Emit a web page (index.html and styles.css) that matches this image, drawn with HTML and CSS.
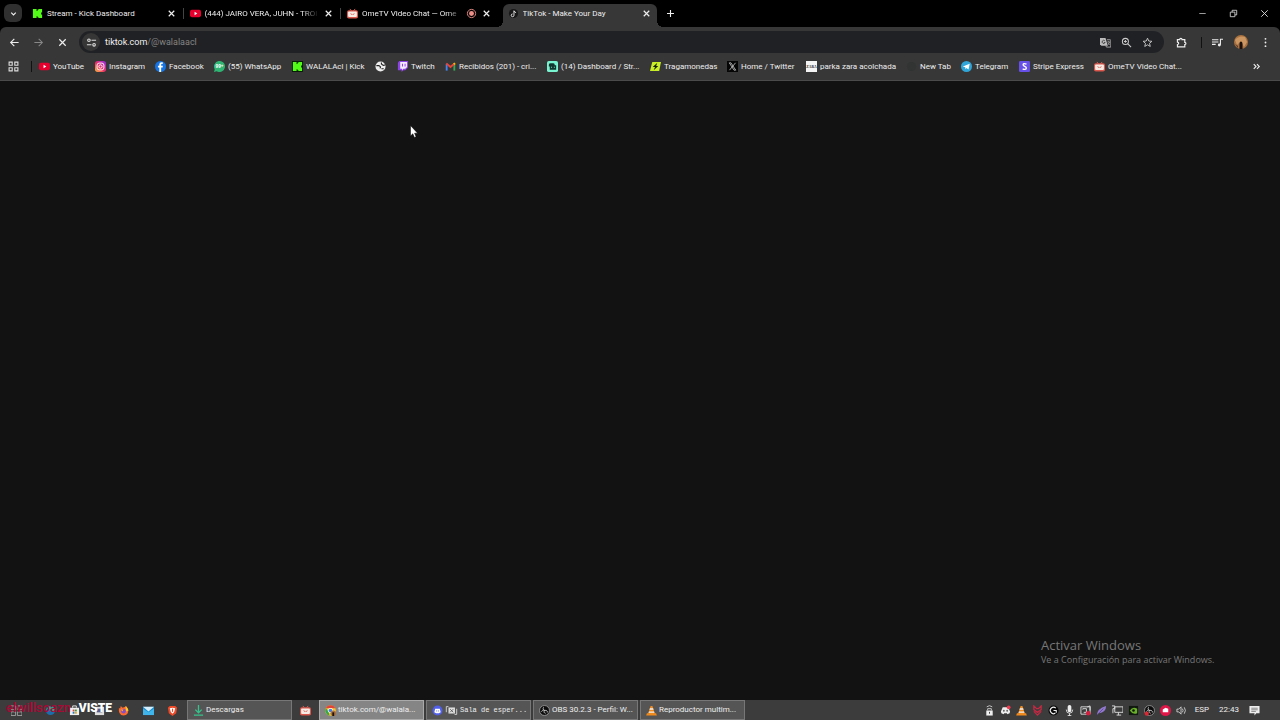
FILE: index.html
```html
<!DOCTYPE html>
<html lang="es">
<head>
<meta charset="utf-8">
<meta name="viewport" content="width=device-width, initial-scale=1">
<title>TikTok - Make Your Day</title>
<link rel="stylesheet" href="styles.css">
</head>
<body>
<svg class="defs" aria-hidden="true">
  <symbol id="kick" viewBox="0 0 12 12"><path fill="#53fc18" d="M1 1h4v2.300h1V2h1V1h4v4h-1v2h1v4H7v-1H6V9H5v2H1z"/></symbol>
  <symbol id="yt" viewBox="0 0 12 12"><rect y="2" width="12" height="8" rx="2" fill="#e6002d"/><path fill="#fff" d="M5 4.200v3.600L8 6z"/></symbol>
  <symbol id="ome" viewBox="0 0 12 12"><path d="M3 1l2 2M9 1L7 3" stroke="#e0645a" stroke-width="1"/><rect x="0" y="2.500" width="12" height="9" rx="2" fill="#d9574c"/><rect x="1.200" y="3.700" width="9.600" height="6" rx="1" fill="#f6ece6"/><path d="M4 5.500l1 2 1-1 1 1 1-2" stroke="#d9574c" fill="none" stroke-width=".7"/></symbol>
  <symbol id="x" viewBox="0 0 12 12"><path d="M3 3l6 6M9 3l-6 6" stroke="currentColor" stroke-width="1.300" fill="none"/></symbol>
  <symbol id="discord" viewBox="0 0 12 12"><path fill="currentColor" d="M3 2.500h6L11 7l-.5 2L8 10 7.500 9h-3L4 10l-2.500-1L1 7z"/><circle cx="4.200" cy="6.300" r="1" fill="#333b"/><circle cx="7.800" cy="6.300" r="1" fill="#333b"/></symbol>
  <symbol id="vlc" viewBox="0 0 12 12"><path fill="#f08a1c" d="M5 1h2l2.500 8h-7zM1 9h10l.8 2.500H.2z"/><path fill="#eee" d="M4.300 3.500h3.400l.6 1.800H3.700zM3.200 7h5.600l.5 1.500H2.700z"/></symbol>
  <symbol id="obs" viewBox="0 0 12 12"><circle cx="6" cy="6" r="5.400" fill="#0c0c0c" stroke="#bbb" stroke-width=".7"/><path d="M5 2.500c-1.200 1.500 0 3.200 1.300 3.400 1.700-.3 3.400.6 2.700 2.300M6 6C5 7.600 5.700 9 7.200 9M6 6C4.500 5.200 3 6 2.800 7.300" stroke="#ddd" fill="none" stroke-width=".9"/></symbol>
</svg>

<div class="window">
  <header class="tabstrip">
    <button class="tab-search" aria-label="Buscar pestañas"><svg viewBox="0 0 12 12"><path d="M3.500 5L6 7.500 8.500 5" fill="none" stroke="#eee" stroke-width="1.300"/></svg></button>
    <nav class="tabs" aria-label="Pestañas">
      <div class="tab"><svg><use href="#kick"/></svg><a href="#">Stream - Kick Dashboard</a><button aria-label="Cerrar"><svg><use href="#x"/></svg></button></div>
      <div class="tab"><svg><use href="#yt"/></svg><a class="fade" href="#">(444) JAIRO VERA, JUHN - TROI</a><button aria-label="Cerrar"><svg><use href="#x"/></svg></button></div>
      <div class="tab"><svg><use href="#ome"/></svg><a class="fade" href="#">OmeTV Video Chat — Ome</a><svg viewBox="0 0 12 12"><circle cx="6" cy="6" r="4.500" fill="none" stroke="#e98b86"/><circle cx="6" cy="6" r="2.700" fill="#ee8f8a"/></svg><button aria-label="Cerrar"><svg><use href="#x"/></svg></button></div>
      <div class="tab active"><svg viewBox="0 0 12 12"><circle cx="6" cy="6" r="5" fill="#171717"/><path d="M6.500 3v5a1.500 1.500 0 1 1-1.500-1.500M6.500 3q.5 1.800 2.300 2" fill="none" stroke="#eee" stroke-width="1"/></svg><a href="#">TikTok - Make Your Day</a><button aria-label="Cerrar"><svg><use href="#x"/></svg></button></div>
    </nav>
    <button class="new-tab" aria-label="Nueva pestaña"><svg viewBox="0 0 12 12"><path d="M6 2.200v7.600M2.200 6h7.600" stroke="#eee" stroke-width="1.200"/></svg></button>
    <div class="win-controls">
      <button aria-label="Minimizar"><svg viewBox="0 0 12 12"><path d="M2.500 6h7" stroke="#aaa"/></svg></button>
      <button aria-label="Restaurar"><svg viewBox="0 0 12 12"><path d="M2.500 4.500h5v5h-5zM4.500 4.500v-2h5v5h-2" fill="none" stroke="#ddd" stroke-width=".9"/></svg></button>
      <button aria-label="Cerrar"><svg viewBox="0 0 12 12"><path d="M2.500 2.500l7 7M9.500 2.500l-7 7" stroke="#ddd"/></svg></button>
    </div>
  </header>

  <div class="frame">
  <div class="toolbar">
    <div class="nav">
      <button aria-label="Atrás"><svg viewBox="0 0 12 12"><path d="M10.500 6H2M5.800 2L1.800 6l4 4" fill="none" stroke="#eee" stroke-width="1.200"/></svg></button>
      <button aria-label="Adelante"><svg viewBox="0 0 12 12"><path d="M1.500 6H10M6.200 2l4 4-4 4" fill="none" stroke="#888" stroke-width="1.100"/></svg></button>
      <button aria-label="Detener"><svg viewBox="0 0 12 12"><path d="M2.500 2.500l7 7M9.500 2.500l-7 7" stroke="#eee" stroke-width="1.300"/></svg></button>
    </div>
    <div class="omnibox">
      <button class="site" aria-label="Información del sitio"><svg viewBox="0 0 12 12"><g fill="none" stroke="#ddd" stroke-width="1.200"><circle cx="3.200" cy="3.500" r="1.400"/><path d="M6 3.500h5M1 8.500h5"/><circle cx="8.800" cy="8.500" r="1.400"/></g></svg></button>
      <a class="url" href="#"><span>tiktok.com</span>/@walalaacl</a>
      <button aria-label="Traducir"><svg viewBox="0 0 12 12"><path d="M0 1h6l2.500 8.500H1.500L0 8z" fill="#bbb"/><path d="M7.500 3H11a.8.800 0 0 1 .8.800V11H7l-.6-1.500" fill="none" stroke="#bbb" stroke-width=".9"/><path d="M5.300 4.200A1.700 1.700 0 1 0 5.600 6H4.300" fill="none" stroke="#292929" stroke-width=".8"/><path d="M7.800 5.500h3.300M9.500 4.500v1M8.300 8.700Q10 7.700 10.400 5.500M8.800 6.700l1.700 2" fill="none" stroke="#bbb" stroke-width=".7"/></svg></button>
      <button aria-label="Zoom"><svg viewBox="0 0 12 12"><g fill="none" stroke="#ccc" stroke-width="1.100"><circle cx="4.800" cy="4.800" r="3.300"/><path d="M7.200 7.200L11 11M3.200 4.800h3.200M4.800 3.200v3.200"/></g></svg></button>
      <button aria-label="Agregar a favoritos"><svg viewBox="0 0 12 12"><path d="M6 1.300l1.400 3.100 3.400.3-2.600 2.200.8 3.400-3-1.800-3 1.800.8-3.400L1.200 4.700l3.400-.3z" fill="none" stroke="#ccc" stroke-width="1"/></svg></button>
    </div>
    <div class="actions">
      <button aria-label="Extensiones"><svg viewBox="0 0 12 12"><path d="M1.500 2.800H4a1.200 1.200 0 0 1 2.600 0h3v3a1.200 1.200 0 0 1 0 2.400v2.500h-8V8.200a1.300 1.300 0 0 0 0-2.600z" fill="none" stroke="#eee" stroke-width="1.300"/></svg></button>
      <i class="divider"></i>
      <button aria-label="Multimedia"><svg viewBox="0 0 12 12"><path d="M0 3h7M0 5.500h7M0 8h4M9.200 8.500V2.500H12" fill="none" stroke="#eee" stroke-width="1.200"/><circle cx="8" cy="8.700" r="1.600" fill="#eee"/></svg></button>
      <button aria-label="Perfil"><svg class="avatar" viewBox="0 0 14 14"><circle cx="7" cy="7" r="7" fill="#a8713f"/><path d="M1 5q4-5 10-3l2 5-3 5-3-6-4 4z" fill="#cc9663"/><path d="M5.500 14V9q0-2.500 1.500-2.500T8.500 9v5z" fill="#1a1110"/><path d="M1 9l3 2v2z" fill="#5b3826"/></svg></button>
      <button aria-label="Menú"><svg viewBox="0 0 12 12" fill="#eee"><circle cx="6" cy="2" r="1"/><circle cx="6" cy="6" r="1"/><circle cx="6" cy="10" r="1"/></svg></button>
    </div>
  </div>

  <nav class="bookmarks" aria-label="Marcadores">
    <button aria-label="Todas"><svg viewBox="0 0 12 12"><path d="M1.200 1.200h3.400v3.400H1.200zM7.400 1.200h3.400v3.400H7.400zM1.200 7.400h3.400v3.400H1.200zM7.400 7.400h3.400v3.400H7.400z" fill="none" stroke="#ddd" stroke-width="1.200"/></svg></button>
    <i class="divider"></i>
    <a href="#"><svg><use href="#yt"/></svg>YouTube</a>
    <a href="#"><svg viewBox="0 0 12 12"><defs><linearGradient id="ig" x1="0" y1="1" x2="1" y2="0"><stop stop-color="#fdc040"/><stop offset=".45" stop-color="#f02e63"/><stop offset="1" stop-color="#8a2be8"/></linearGradient></defs><rect width="12" height="12" rx="3" fill="url(#ig)"/><rect x="2.300" y="2.300" width="7.400" height="7.400" rx="2.200" fill="none" stroke="#fff"/><circle cx="6" cy="6" r="1.800" fill="none" stroke="#fff"/></svg>Instagram</a>
    <a href="#"><svg viewBox="0 0 12 12"><circle cx="6" cy="6" r="6" fill="#1473e6"/><path d="M6.700 12V7h1.600l.3-1.900H6.700V4q0-.9 1-.9h1V1.500q-4-.8-4 2.200v1.400H3.200V7h1.500v5z" fill="#fff"/></svg>Facebook</a>
    <a href="#"><svg viewBox="0 0 12 12"><path d="M0 12l.8-3A6 6 0 1 1 3 11.200z" fill="#2fb573"/><text x="6" y="8" class="badge">99+</text></svg>(55) WhatsApp</a>
    <a href="#"><svg viewBox="0 0 12 12"><path fill="#071d05" d="M0 0h12v12H0z"/><use href="#kick" width="12" height="12"/></svg>WALALAcl | Kick</a>
    <a href="#" aria-label="Sitio web"><svg viewBox="0 0 12 12"><circle cx="6" cy="6" r="5.500" fill="#eee"/><path d="M1.500 5h2.800L6 6.500 5.500 8M7 1.500v1.800l2 1.500 2-.5M7 8.500h2.500" fill="none" stroke="#222" stroke-width="1.200"/></svg></a>
    <a href="#"><svg viewBox="0 0 12 12"><path d="M2.500 0H12v7l-3 3H7l-2 2V10H1V2z" fill="#8c43e6"/><path d="M3.500 1H11v5.500L9 8.500H7L5.500 10V8.500h-2z" fill="#f2eafd"/><path d="M6 3v3M8.800 3v3" stroke="#8c43e6" stroke-width="1.100"/></svg>Twitch</a>
    <a href="#"><svg viewBox="0 0 12 12" fill="none" stroke-width="2"><path d="M1.800 10.500V3" stroke="#4285f4"/><path d="M10.200 10.500V3" stroke="#34a853"/><path d="M1.500 2.800L6 6.500l4.500-3.700" stroke="#e74437"/><path d="M9.500 3.600l1.500-1.200" stroke="#fbbc04"/></svg>Recibidos (201) - cri...</a>
    <a href="#"><svg viewBox="0 0 12 12"><rect width="12" height="12" rx="2" fill="#78f5d0"/><path d="M2 6V4Q2 2.500 4 2.500h3q1.500 0 1.500 2H10v5H3V6z" fill="#11362e"/><path d="M4.500 6.300h1v1h-1zM7.500 6.300h1v1h-1z" fill="#78f5d0"/></svg>(14) Dashboard / Str...</a>
    <a href="#"><svg viewBox="0 0 12 12"><path d="M2.500 1H12l-2 10H0z" fill="#c8ef26"/><path d="M8 2L3 6.500h2.500L4 10l5-4.500H6.700z" fill="#17200b"/></svg>Tragamonedas</a>
    <a href="#"><svg viewBox="0 0 12 12"><path fill="#050505" d="M0 0h12v12H0z"/><path d="M2.500 2h1.800l5.200 8H7.700zM9.300 2L2.700 10" fill="none" stroke="#ddd" stroke-width=".8"/></svg>Home / Twitter</a>
    <a href="#"><svg viewBox="0 0 12 12"><path fill="#f4f4f4" d="M0 0h12v12H0z"/><text x="6" y="8" class="zara">ZARA</text></svg>parka zara acolchada</a>
    <a href="#"><svg viewBox="0 0 12 12"><circle cx="6" cy="6" r="5" fill="#323333"/></svg>New Tab</a>
    <a href="#"><svg viewBox="0 0 12 12"><circle cx="6" cy="6" r="6" fill="#30a5d8"/><path d="M2 6l7.500-3L8.200 9.200 6 7.700 5 9l-.4-2.200z" fill="#fff"/></svg>Telegram</a>
    <a href="#"><svg viewBox="0 0 12 12"><rect width="12" height="12" rx="1.500" fill="#6750e8"/><path d="M8.200 3.500Q4.500 2 4.500 4.200C4.500 6 8 5.800 8 7.700 8 9.800 5.300 9.200 4 8.500" fill="none" stroke="#fff" stroke-width="1.500"/></svg>Stripe Express</a>
    <a href="#"><svg><use href="#ome"/></svg>OmeTV Video Chat...</a>
    <button class="more" aria-label="Más marcadores"><svg viewBox="0 0 12 12"><path d="M3 3.500l2.500 2.500L3 8.500M6.500 3.500L9 6 6.500 8.500" fill="none" stroke="#eee" stroke-width="1.200"/></svg></button>
  </nav>
  </div>

  <main class="page">
    <svg class="cursor" viewBox="0 0 8 13"><path d="M.5.500v10.500l2.300-2.200 1.600 3.700 1.700-.8-1.500-3.500h3z" fill="#fff" stroke="#000" stroke-width=".5"/></svg>
    <aside class="activate"><h1>Activar Windows</h1><p>Ve a Configuración para activar Windows.</p></aside>
  </main>

  <footer class="taskbar">
    <div class="pinned">
      <button aria-label="Vista de tareas"><svg viewBox="0 0 12 12"><path d="M0 1h5v4H0zM7 1h5v4H7zM0 7.500h5v4H0zM7 7.500h5v4H7z" fill="none" stroke="#aaa" stroke-width=".9"/></svg></button>
      <button aria-label="Edge"><svg viewBox="0 0 12 12"><circle cx="6" cy="6" r="5" fill="#1b6eae"/><path d="M1 6q1-5 6-4 4 1 4 4-2 2-5 1 1-3-2-3Q2 4 1 6z" fill="#35a884"/></svg></button>
      <button aria-label="Tienda"><svg viewBox="0 0 12 12"><path d="M4 3V1h4v2" fill="none" stroke="#eee"/><path d="M1 3h10v8H1z" fill="#eee"/><path d="M4 5h2v2H4z" fill="#d44"/><path d="M6.500 5h2v2h-2z" fill="#393"/><path d="M4 7.500h2v2H4z" fill="#27c"/><path d="M6.500 7.500h2v2h-2z" fill="#da2"/></svg></button>
      <button aria-label="Fotos"><svg viewBox="0 0 12 12"><path d="M1 2h10v9H1z" fill="#ddd"/><path d="M3 4h6v4H3z" fill="#555c88"/></svg></button>
      <button aria-label="Firefox"><svg viewBox="0 0 12 12"><path d="M1 3l1.300 1L3 1l2 2 3-1 1-1 2 4q1 6-5 6.500Q0 11 1 3z" fill="#ff6b2c"/><path d="M8 1q3 2 3.500 5L9 7z" fill="#ffc928"/><circle cx="6" cy="6.700" r="2.500" fill="#8050c8"/><path d="M3 5l3 0-1 2z" fill="#ffae25"/></svg></button>
      <button aria-label="Correo"><svg viewBox="0 0 12 12"><path d="M0 2h12v9H0z" fill="#188fd2"/><path d="M0 2h12L6 7z" fill="#d8effb"/><path d="M0 4l6 4 6-4v7H0z" fill="#40b5eb"/></svg></button>
      <button aria-label="Brave"><svg viewBox="0 0 12 12"><path d="M3 1h6l2 2-1 6-4 3-4-3-1-6z" fill="#ef4927"/><path d="M3 3.500l3-.5 3 .5-1.200 4L6 9.500l-1.800-2z" fill="#fff"/><path d="M6 4v3.500" stroke="#ef4927" stroke-width="1.200"/></svg></button>
      <p class="overlay"><span>elwillsoazn</span><strong>VISTE</strong></p>
    </div>
    <div class="tasks">
      <button class="task"><svg viewBox="0 0 12 12"><path d="M6 0v8M2.500 5L6 8.500 9.500 5M1 11h10" fill="none" stroke="#36c28c" stroke-width="1.400"/></svg><span>Descargas</span></button>
      <button class="task-icon" aria-label="OmeTV"><svg><use href="#ome"/></svg></button>
      <button class="task current"><svg viewBox="0 0 12 12"><circle cx="6" cy="6" r="5.800" fill="#f7c52c"/><path d="M.8 3.500A5.800 5.800 0 0 1 11.300 3.500H6z" fill="#e34436"/><path d="M1 3.300L4 8l1 3.700A5.800 5.800 0 0 1 1 3.300z" fill="#34a853"/><circle cx="6" cy="6" r="2.700" fill="#fff"/><circle cx="6" cy="6" r="2" fill="#3f7de2"/><circle cx="9" cy="9" r="3" fill="#a8713f"/><path d="M8 12V8h2v4z" fill="#1a1110"/></svg><span>tiktok.com/@walala...</span></button>
      <button class="task"><svg viewBox="0 0 12 12"><circle cx="6" cy="6" r="5.500" fill="#5260e8"/><path d="M3.500 4h5l1 4-2 1h-3l-2-1z" fill="#fff"/><path d="M5 6v1M7 6v1" stroke="#5260e8"/></svg><svg class="film" viewBox="0 0 15 12"><path d="M1.500 8V1.500H4M13.500 4v6.500H11" fill="none" stroke="#ddd"/><path d="M4 2.500h7.500v7H4z" fill="#ddd"/><path d="M6 4.500l3.500 3.500M6 8l3.500-3.500" stroke="#555"/></svg><span class="mono">Sala de esper...</span></button>
      <button class="task"><svg><use href="#obs"/></svg><span>OBS 30.2.3 - Perfil: W...</span></button>
      <button class="task"><svg><use href="#vlc"/></svg><span>Reproductor multim...</span></button>
    </div>
    <div class="tray">
      <svg viewBox="0 0 12 12"><path d="M2.500 6h7v5.500h-7z" fill="#eee"/><path d="M4 6V4h4v2M3 2q3-2.500 6 0" fill="none" stroke="#ccc"/><path d="M6 7.500v2" stroke="#333"/></svg>
      <svg class="light" viewBox="0 0 12 12"><use href="#discord" width="12" height="12"/><circle cx="9.500" cy="2.500" r="2" fill="#ef3c50"/></svg>
      <svg><use href="#vlc"/></svg>
      <svg viewBox="0 0 12 12"><path d="M2 1l3 3h2l3-3v4L6 8 2 5zM2 7l4 4 4-4" fill="none" stroke="#c42842" stroke-width="1.400"/></svg>
      <svg viewBox="0 0 12 12"><circle cx="6" cy="6" r="5.500" fill="#080808"/><path d="M8.500 3.500A3.500 3.500 0 1 0 8 8.800M6 6h3v2.500" fill="none" stroke="#eee" stroke-width="1.200"/></svg>
      <svg viewBox="0 0 12 12"><rect x="4" y="0" width="4" height="8" rx="2" fill="#eee"/><path d="M2.500 5q0 4 3.500 4t3.500-4M6 9v3M4 11.500h4" fill="none" stroke="#ddd"/></svg>
      <svg viewBox="0 0 12 12"><path d="M1 2h10v8H1zM3 5V4h4v4H4" fill="none" stroke="#ddd"/><path d="M8 2l3-1v5" fill="none" stroke="#ddd"/><circle cx="9" cy="9" r="2.500" fill="#d01f3f"/></svg>
      <svg viewBox="0 0 12 12"><path d="M1 11Q1 4 11 1q0 7-8 8z" fill="#9279cf"/><path d="M1 11l7-7" stroke="#57418b" stroke-width=".8"/></svg>
      <svg viewBox="0 0 12 12"><path d="M3 2h9v6H3zM7 8v3M5 11h5M0 1h3v3H1v5" fill="none" stroke="#ddd"/></svg>
      <svg viewBox="0 0 12 12"><path d="M1 1h10v10H1z" fill="#101810"/><path d="M2 6q3-5 8-2v5q-5 2-8-3z" fill="#68ae28"/><circle cx="6" cy="6" r="1.400" fill="#101810"/></svg>
      <svg viewBox="0 0 12 12"><use href="#obs" width="12" height="12"/><circle cx="3" cy="9.500" r="2.300" fill="#dd2733"/></svg>
      <svg viewBox="0 0 12 12"><circle cx="6" cy="6" r="6" fill="#df1647"/><path d="M3 5l3-2 3 1v4H7L5 8H3z" fill="#fff"/></svg>
      <svg viewBox="0 0 12 12"><path d="M1 4.500h2L5.500 2v8L3 7.500H1zM7 4q1.500 2 0 4M9 2.500q2.500 3.500 0 7" fill="none" stroke="#ddd" stroke-width=".9"/></svg>
      <span class="lang">ESP</span><time>22:43</time>
      <button aria-label="Notificaciones"><svg viewBox="0 0 12 12"><path d="M.5 1h11v8H8l-2 2.500V9H.5z" fill="#eee"/><path d="M2.500 3.500h7M2.500 5.200h7M2.500 7h5" stroke="#555" stroke-width=".7"/></svg></button>
    </div>
  </footer>
</div>
</body>
</html>
```
FILE: styles.css
```css
* { box-sizing: border-box; }
body { margin: 0; background: #121212; color: #eee; font: 8px/12px Roboto, "Open Sans", sans-serif; }
button { margin: 0; padding: 0; border: 0; background: none; color: inherit; font: inherit; display: flex; align-items: center; justify-content: center; flex: none; }
a { color: inherit; text-decoration: none; }
svg { width: 11px; height: 11px; flex: none; display: block; }
.defs { position: absolute; width: 0; height: 0; }
.window { display: flex; flex-direction: column; min-height: 100vh; }

.tabstrip { display: flex; align-items: stretch; height: 27px; background: #000; }
.tab-search { width: 18px; height: 18px; margin: 4px 5px 0 4px; border-radius: 6px; background: #303030; }
.tabs { display: flex; flex: 0 1 630px; min-width: 0; }
.tab { position: relative; display: flex; flex: 1 1 0; align-items: center; gap: 4px; min-width: 0; padding: 0 8px 0 5px; }
.tab:nth-child(-n+2)::after { content: ""; position: absolute; right: 1px; top: 8px; width: 1px; height: 11px; background: #444; }
.tab a { flex: 1; min-width: 0; overflow: hidden; white-space: nowrap; }
.tab .fade { mask-image: linear-gradient(to right, #000 85%, transparent); }
.tab.active { margin: 4px 0 0 3px; padding: 0 5px 4px; border-radius: 6px 6px 0 0; background: #373737; }
.tab.active::before, .tab.active::after { content: ""; position: absolute; bottom: 0; width: 6px; height: 6px; }
.tab.active::before { left: -6px; background: radial-gradient(circle at 0 0, transparent 6px, #373737 6px); }
.tab.active::after { right: -6px; background: radial-gradient(circle at 100% 0, transparent 6px, #373737 6px); }
.new-tab { width: 26px; }
.win-controls { display: flex; margin-left: auto; }
.win-controls button { width: 31px; }

.frame { background: #000; }
.toolbar { display: flex; align-items: center; gap: 8px; height: 30px; padding: 0 6px 0 5px; border-radius: 6px 6px 0 0; background: #373737; }
.nav { display: flex; gap: 6px; }
.nav button { width: 18px; }
.omnibox { display: flex; align-items: center; flex: 1; gap: 10px; height: 22px; padding: 0 11px 0 3px; border-radius: 11px; background: #202124; font-size: 9px; }
.site { width: 18px; height: 18px; border-radius: 9px; background: #363636; }
.url { flex: 1; margin-left: -5px; color: #858585; }
.url span { color: #f0f0f0; }
.actions { display: flex; align-items: center; gap: 6px; }
.actions button { width: 18px; }
.actions .divider { margin-left: 5px; }
.avatar { width: 14px; height: 14px; }
.divider { width: 1px; height: 11px; background: #111; justify-self: center; }

.bookmarks { display: grid; grid-template-columns: 16px 15px 56px 60px 59px 78px 83px 22px 48px 102px 103px 77px 79px 100px 55px 58px 75px 100px 1fr; align-items: center; height: 24px; padding: 0 18px 4px 8px; background: #373737; border-bottom: 1px solid #4b4b4b; }
.bookmarks a { display: flex; align-items: center; gap: 3px; white-space: nowrap; }
.bookmarks button { justify-content: flex-start; }
.bookmarks .more { justify-self: end; }
.badge { fill: #fff; font: bold 5px "Open Sans", sans-serif; text-anchor: middle; }
.zara { fill: #222; font: bold 4px "Liberation Serif", serif; text-anchor: middle; }

.page { position: relative; flex: 1; display: flex; align-items: flex-end; justify-content: flex-end; padding: 0 55px 34px 0; }
.cursor { position: absolute; left: 410px; top: 44px; width: 8px; height: 13px; }
.activate { min-width: 184px; color: #777; font-family: "Open Sans", sans-serif; }
.activate h1 { margin: 0; font-size: 13px; line-height: 18px; font-weight: 400; }
.activate p { margin: 0; font-size: 9px; line-height: 12px; }

.taskbar { display: flex; height: 20px; background: #3c3c3c; }
.pinned { position: relative; display: flex; align-items: center; width: 187px; padding: 0 2px 0 11px; }
.pinned button { flex: 1; }
.pinned button:first-child { flex: 0 0 27px; justify-content: flex-start; }
.overlay { position: absolute; left: 6px; top: 1px; display: flex; gap: 8px; margin: 0; font: bold 13px/14px Roboto, sans-serif; }
.overlay span { color: #a80834; font-weight: 500; }
.overlay strong { color: #fff; font-size: 12px; }
.tasks { display: flex; gap: 2px; }
.task { width: 105px; padding: 0 0 0 5px; gap: 2px; justify-content: flex-start; border: 1px solid #777; background: #555; white-space: nowrap; }
.current { background: #858585; border-color: #aaa; }
.task-icon { width: 23px; }
.film { width: 13px; }
.mono { font: 7px/12px "Liberation Mono", monospace; }
.tray { display: flex; align-items: center; gap: 5px; margin-left: auto; padding-right: 20px; }
.light { color: #eee; }
.lang { margin-left: 3px; }
.tray time { margin: 0 5px; }
```
